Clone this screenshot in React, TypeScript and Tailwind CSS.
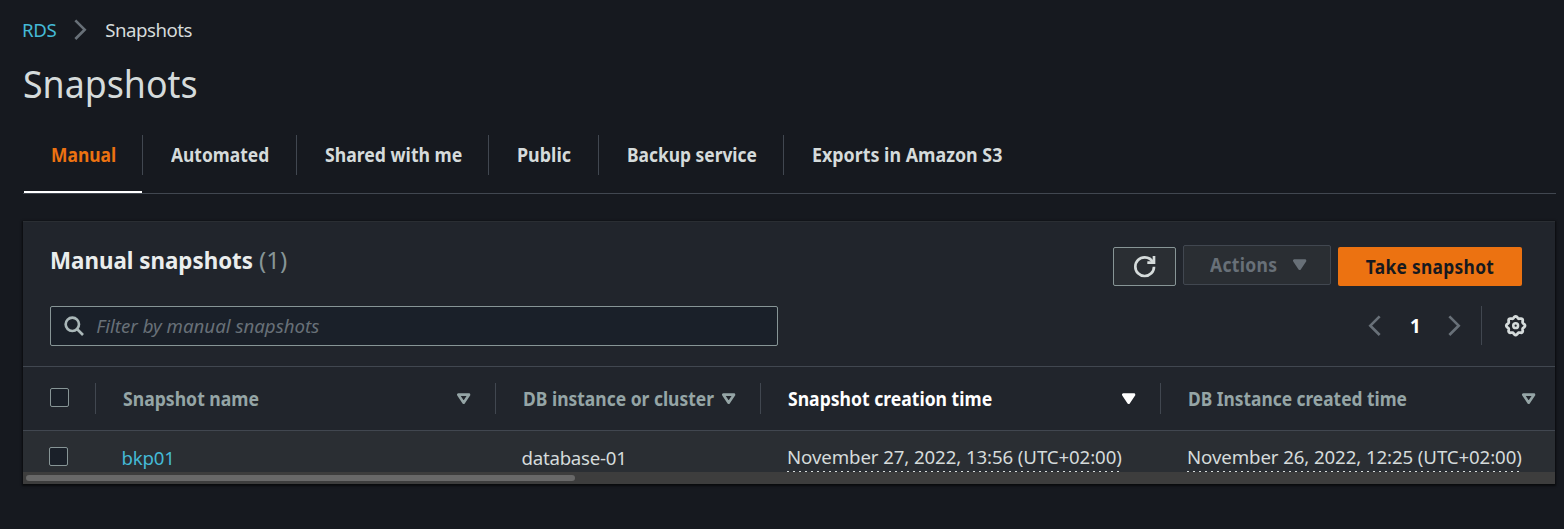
import React from "react";

const tabs = [
  { label: "Manual", box: "w-[120px]", scale: "scale-x-[0.935]" },
  { label: "Automated", box: "w-[154px]", scale: "scale-x-[0.933]" },
  { label: "Shared with me", box: "w-[192px]", scale: "scale-x-[0.945]" },
  { label: "Public", box: "w-[110px]", scale: "scale-x-[0.96]" },
  { label: "Backup service", box: "w-[185px]", scale: "scale-x-[0.932]" },
  { label: "Exports in Amazon S3", box: "w-[240px]", scale: "scale-x-[0.957]" },
];

const columns = [
  { label: "Snapshot name", box: "w-[400px]", active: false, scale: "scale-x-[0.944]" },
  { label: "DB instance or cluster", box: "w-[265px]", active: false, scale: "scale-x-[0.936]" },
  { label: "Snapshot creation time", box: "w-[400px]", active: true, scale: "scale-x-[0.942]" },
  { label: "DB Instance created time", box: "w-[399px]", active: false, scale: "scale-x-[0.93]" },
];

const gearOutline =
  Array.from({ length: 96 }, (_, i) => {
    const a = (i / 96) * Math.PI * 2;
    const r = 6.35 + 0.65 * Math.cos(8 * a);
    return `${i ? "L" : "M"}${(8 + r * Math.cos(a)).toFixed(2)} ${(8 + r * Math.sin(a)).toFixed(2)}`;
  }).join("") + "Z";

function Icon({ children, className = "" }: { children: React.ReactNode; className?: string }) {
  return (
    <svg viewBox="0 0 16 16" fill="none" stroke="currentColor" strokeWidth="2" className={`h-[21.33px] w-[21.33px] shrink-0 overflow-visible ${className}`}>
      {children}
    </svg>
  );
}

function SortIcon({ active }: { active: boolean }) {
  return (
    <Icon>
      <path d="M4 5h8l-4 6-4-6z" strokeLinejoin="round" fill={active ? "currentColor" : "none"} />
    </Icon>
  );
}

function Checkbox() {
  return <span className="block h-[19px] w-[19px] shrink-0 rounded-[2px] border border-[#879596] bg-[#1a2029]" />;
}

function Timestamp({ children }: { children: React.ReactNode }) {
  return (
    <span className="-mt-px block h-[28px] w-[335px] tracking-[-0.1px] whitespace-nowrap">
      {children}
      <svg className="block h-px w-full">
        <line x1="0" y1="0.5" x2="335" y2="0.5" stroke="#d5dbdb" strokeDasharray="2 4" />
      </svg>
    </span>
  );
}

export default function App() {
  return (
    <div className="h-[529px] w-[1564px] overflow-hidden bg-[#16191f] pl-[23px] font-['Noto_Sans',sans-serif] text-[18.67px] leading-[28px] text-[#d5dbdb]">
      <nav className="flex h-[45px] items-start pt-[16px]">
        <a className="-ml-px w-[48px] tracking-[-0.4px] text-[#44b9d6]">RDS</a>
        <Icon className="mt-[3px] text-[#687078]">
          <path d="M4 1l7 7-7 7" />
        </Icon>
        <span className="ml-[14px] tracking-[-0.5px]">Snapshots</span>
      </nav>
      <h1 className="h-[90px] origin-left scale-x-[0.957] pt-[15px] text-[37.33px] leading-[48px]">Snapshots</h1>

      <div className="flex h-[59px] w-[1533px] border-b border-[#414750]">
        {tabs.map((t, i) => (
          <div key={t.label} className={`flex h-[58px] flex-col justify-between ${t.box}`}>
            <div className={`flex h-[40px] items-center pl-[27.5px] font-bold whitespace-nowrap ${i < 5 ? "border-r border-[#414750]" : ""} ${i === 0 ? "text-[#ec7211]" : ""}`}>
              <span className={`origin-left ${t.scale}`}>{t.label}</span>
            </div>
            {i === 0 && <div className="ml-px h-[2px] w-[118px] bg-white" />}
          </div>
        ))}
      </div>

      <main className="mt-[27px] h-[263px] w-[1532px] overflow-hidden border-t border-[#2a2e33] bg-[#21252c] shadow-[0_1px_2px_1px_rgba(0,0,0,0.6)]">
        <div className="flex h-[84px] items-start pl-[27px]">
          <h2 className="flex w-[1063px] pt-[23px] text-[24px] leading-[30px] text-[#eaeded]">
            <span className="w-[209px] origin-left scale-x-[0.93] font-bold whitespace-nowrap">Manual snapshots</span>
            <span className="text-[#879596]">(1)</span>
          </h2>
          <button className="mt-[25px] flex h-[39px] w-[63px] items-center justify-center rounded-[2px] border border-[#879596] bg-[#2a2e33]">
            <Icon>
              <path d="M10 5h5V0" />
              <path d="M15 8a6.957 6.957 0 0 1-7 7 6.957 6.957 0 0 1-7-7 6.957 6.957 0 0 1 7-7 6.87 6.87 0 0 1 6.3 4" />
            </Icon>
          </button>
          <button className="mt-[23px] ml-[7px] flex h-[40px] w-[148px] items-center rounded-[2px] border border-[#414750] bg-[#2a2e33] pl-[26px] font-bold text-[#687078]">
            <span className="w-[79px] origin-left scale-x-[0.94] text-left tracking-[0.33px]">Actions</span>
            <Icon>
              <path d="M4 5h8l-4 6-4-6z" strokeLinejoin="round" fill="currentColor" />
            </Icon>
          </button>
          <button className="mt-[25px] ml-[7px] flex h-[39px] w-[184px] items-center justify-center rounded-[2px] bg-[#ec7211] font-bold text-[#16191f]">
            <span className="scale-x-[0.93] pt-px tracking-[0.33px] whitespace-nowrap">Take snapshot</span>
          </button>
        </div>

        <div className="flex h-[60px] items-start pl-[27px]">
          <div className="flex h-[40px] w-[728px] items-center rounded-[2px] border border-[#879596] bg-[#1a2029] pl-[12px]">
            <Icon className="text-[#aab7b8]">
              <circle cx="7" cy="7" r="5" />
              <path d="M15 15l-4.5-4.5" />
            </Icon>
            <span className="ml-[12px] text-[#687078] italic">Filter by manual snapshots</span>
          </div>
          <div className="ml-[587px] flex h-[40px] items-center">
            <Icon className="text-[#687078]">
              <path d="M11 1L4 8l7 7" />
            </Icon>
            <span className="w-[58px] text-center font-bold text-white">1</span>
            <Icon className="text-[#687078]">
              <path d="M4 1l7 7-7 7" />
            </Icon>
            <span className="mb-px ml-[15px] h-[39px] w-px bg-[#414750]" />
            <Icon className="ml-[23px]">
              <path d={gearOutline} strokeWidth="2.1" />
              <circle cx="8" cy="8" r="1.8" strokeWidth="1.9" />
            </Icon>
          </div>
        </div>

        <div className="flex h-[65px] items-center border-y border-[#414750] font-bold text-[#95a5a6]">
          <div className="flex h-[31px] w-[73px] shrink-0 items-start border-r border-[#414750] pt-[5px] pl-[27px]">
            <Checkbox />
          </div>
          {columns.map((c, i) => (
            <div key={c.label} className={`flex h-[31px] shrink-0 items-center pr-[21px] pl-[26.5px] whitespace-nowrap ${i < 3 ? "border-r border-[#414750]" : ""} ${c.active ? "text-white" : ""} ${c.box}`}>
              <div className="flex w-0 flex-1">
                <span className={`shrink-0 origin-left pt-px ${c.scale}`}>{c.label}</span>
              </div>
              <SortIcon active={c.active} />
            </div>
          ))}
        </div>

        <div className="flex h-[41px] items-start overflow-hidden bg-[#2a2e33] pt-[13px]">
          <div className="w-[98.5px] pt-[3px] pl-[26px]">
            <Checkbox />
          </div>
          <a className="w-[400px] tracking-[-0.2px] text-[#44b9d6]">bkp01</a>
          <span className="w-[265.5px] tracking-[-0.25px]">database-01</span>
          <div className="w-[400px]"><Timestamp>November 27, 2022, 13:56 (UTC+02:00)</Timestamp></div>
          <div><Timestamp>November 26, 2022, 12:25 (UTC+02:00)</Timestamp></div>
        </div>
        <div className="flex h-[12px] items-center bg-[#3d3d3d] pl-[3px]">
          <div className="h-[6px] w-[549px] rounded-full bg-[#686868]" />
        </div>
      </main>
    </div>
  );
}
